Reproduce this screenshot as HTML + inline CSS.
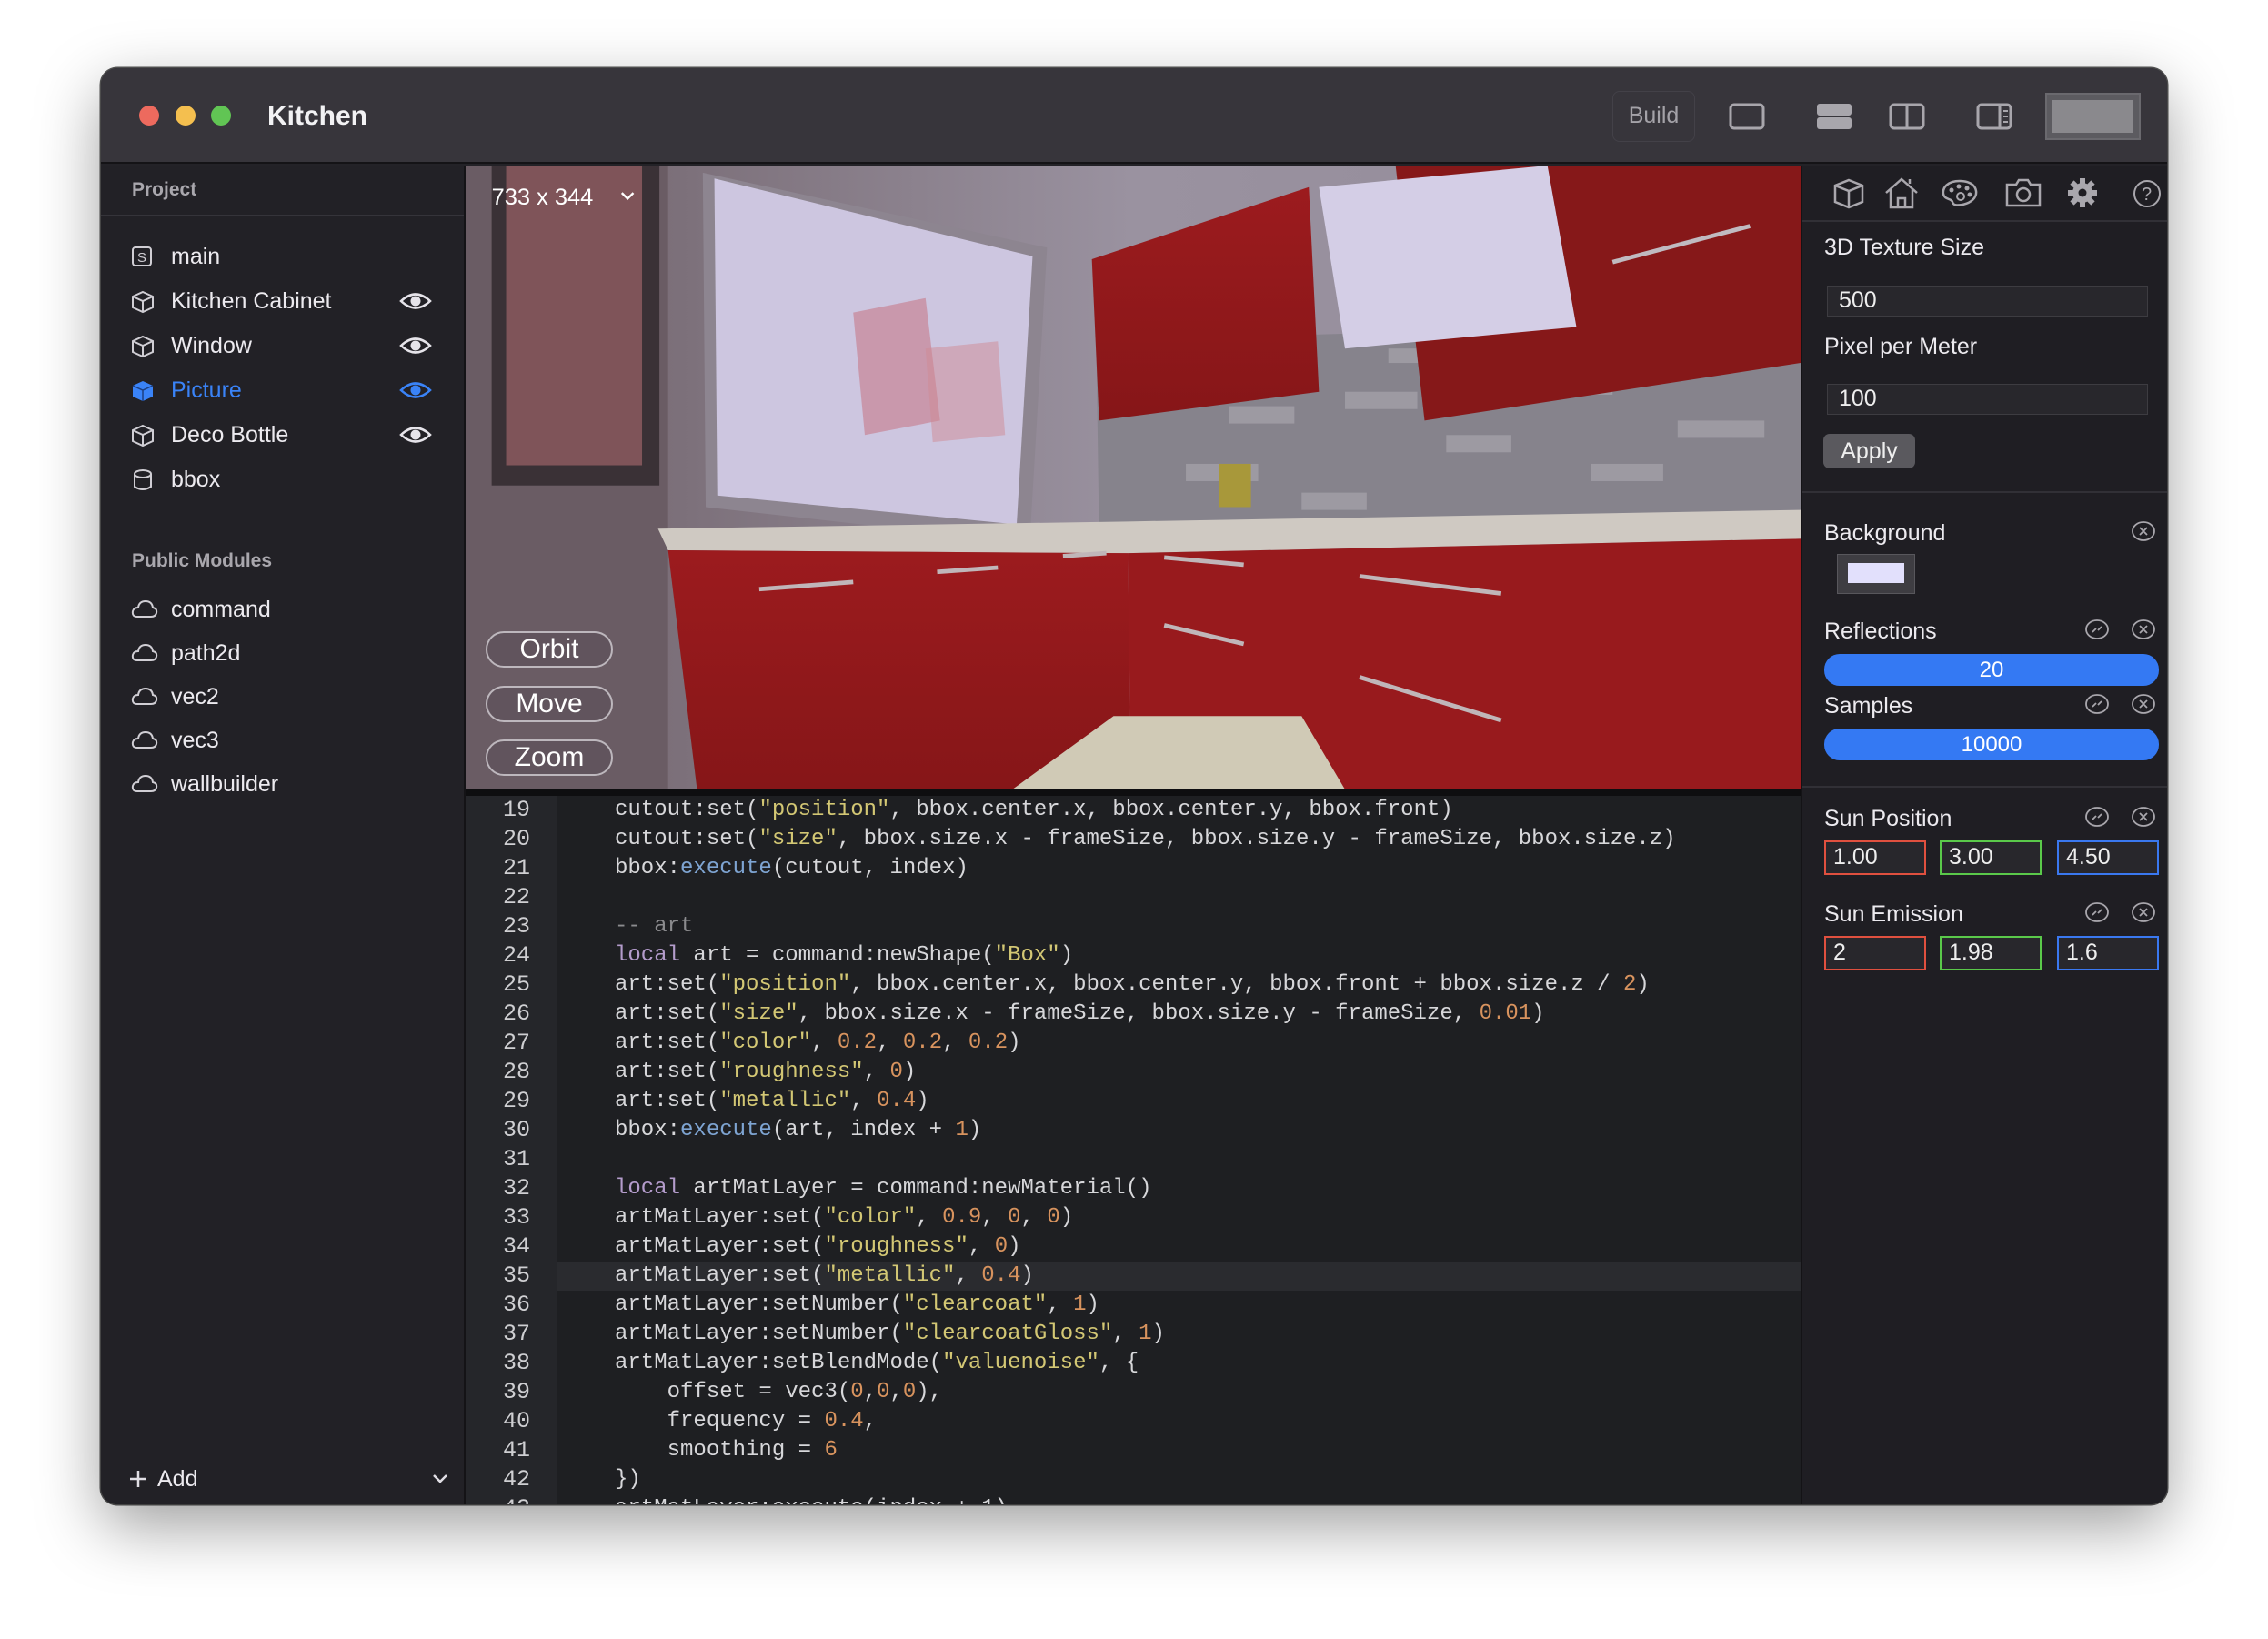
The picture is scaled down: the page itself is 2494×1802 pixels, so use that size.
<!DOCTYPE html>
<html><head><meta charset="utf-8"><style>
*{margin:0;padding:0;box-sizing:border-box}
body{width:2494px;height:1802px;background:#fff;position:relative;overflow:hidden;font-family:"Liberation Sans",sans-serif;color:#e8e8ea}
.win{position:absolute;left:111px;top:75px;width:2272px;height:1579px;border-radius:18px;background:#232227;box-shadow:0 24px 70px rgba(0,0,0,.38),0 0 0 1.5px #555;overflow:hidden}
.a{position:absolute}
.tb{left:0;top:0;width:2272px;height:105px;background:#37353b;border-bottom:2px solid #141316}
.dot{width:22px;height:22px;border-radius:50%;top:41px}
.side{left:0;top:107px;width:401px;height:1472px;background:#222126;border-right:2px solid #141316}
.si{position:absolute;left:0;width:400px;font-size:25px;color:#eceaef;height:40px;line-height:40px}
.si svg{position:absolute;left:33px;top:8px}
.si span{position:absolute;left:77px;white-space:nowrap}
.si svg.eye{position:absolute;left:328px;top:9px}
.hdr{position:absolute;left:34px;font-size:21px;font-weight:bold;color:#a9a7ad}
.vp{left:401px;top:107px;width:1468px;height:686px;overflow:hidden}
.code{left:401px;top:800px;width:1468px;height:779px;background:#1e1f22;font-family:"Liberation Mono",monospace;font-size:24px}
.gut{position:absolute;left:0;top:0;width:100px;height:100%;background:#25262a}
.ln{position:absolute;left:0;width:1468px;height:32px;line-height:32px;white-space:pre}
.ln b{font-weight:normal;position:absolute;left:0;width:71px;text-align:right;color:#cfcfd2;font-size:25px}
.ln i{font-style:normal;position:absolute;left:164px;color:#d7d7da}
.s{color:#d3c774}.n{color:#d8935e}.k{color:#b49ccc}.f{color:#7ea4d2}.c{color:#8b8b8e}
.rp{left:1869px;top:107px;width:403px;height:1472px;background:#1f1e23;border-left:2px solid #141316}
.lab{position:absolute;left:24px;font-size:25px;color:#eceaef}
.inp{position:absolute;left:27px;width:353px;height:34px;background:#28272c;border:1.5px solid #3d3c41;font-size:25px;line-height:31px;padding-left:12px;color:#eee}
.sep{position:absolute;left:0;width:403px;height:2px;background:#313036}
.sl{position:absolute;left:24px;width:368px;height:35px;border-radius:17px;background:#3479f3;text-align:center;font-size:24px;line-height:35px;color:#fff}
.box{position:absolute;width:112px;height:38px;background:#28272c;border:2.5px solid;font-size:25px;line-height:33px;padding-left:8px;color:#eee}
.ic{position:absolute}
.btn{position:absolute;width:140px;height:40px;border:2px solid #bdb7bd;border-radius:20px;text-align:center;line-height:36px;font-size:30px;color:#fff;background:rgba(80,70,80,.35)}
</style></head><body>
<div class="win">
<div class="a tb">
 <div class="a dot" style="left:42px;background:#ed6a5e"></div>
 <div class="a dot" style="left:82px;background:#f4bf4f"></div>
 <div class="a dot" style="left:121px;background:#61c554"></div>
 <div class="a" style="left:183px;top:36px;font-size:30px;font-weight:bold;color:#f2f2f4">Kitchen</div>
 <div class="a" style="left:1662px;top:25px;width:91px;height:56px;border:1.5px solid #434148;border-radius:8px;font-size:25px;line-height:53px;text-align:center;color:#a4a2a8">Build</div>
 <svg class="a" style="left:1790px;top:38px" width="40" height="30"><rect x="2" y="2" width="36" height="26" rx="4" fill="none" stroke="#a8a6ac" stroke-width="3"/></svg>
 <svg class="a" style="left:1886px;top:38px" width="40" height="30"><rect x="1" y="1" width="38" height="13" rx="3" fill="#a8a6ac"/><rect x="1" y="16" width="38" height="13" rx="3" fill="#a8a6ac"/></svg>
 <svg class="a" style="left:1966px;top:38px" width="40" height="30"><rect x="2" y="2" width="36" height="26" rx="4" fill="none" stroke="#a8a6ac" stroke-width="3"/><line x1="20" y1="2" x2="20" y2="28" stroke="#a8a6ac" stroke-width="3"/></svg>
 <svg class="a" style="left:2062px;top:38px" width="40" height="30"><rect x="2" y="2" width="36" height="26" rx="4" fill="none" stroke="#a8a6ac" stroke-width="3"/><line x1="26" y1="2" x2="26" y2="28" stroke="#a8a6ac" stroke-width="3"/><line x1="30" y1="9" x2="35" y2="9" stroke="#a8a6ac" stroke-width="2"/><line x1="30" y1="15" x2="35" y2="15" stroke="#a8a6ac" stroke-width="2"/><line x1="30" y1="21" x2="35" y2="21" stroke="#a8a6ac" stroke-width="2"/></svg>
 <div class="a" style="left:2138px;top:27px;width:105px;height:52px;background:#5c5b60;border:2px solid #6a696e"><div style="margin:6px 6px;height:36px;background:#8a898d"></div></div>
</div>

<div class="a side">
 <div class="hdr" style="top:15px;">Project</div>
 <div class="a" style="left:0;top:54px;width:399px;height:2px;background:#35343a"></div>
 <div class="si" style="top:80px"><svg width="24" height="24"><rect x="2" y="2" width="20" height="20" rx="3" fill="none" stroke="#d0ced4" stroke-width="2"/><text x="7" y="18" font-size="15" fill="#d0ced4" font-family="Liberation Sans">S</text></svg><span>main</span></div>
 <div class="si" style="top:129px"><svg width="26" height="26"><path d="M13 2 L24 7 L24 19 L13 24 L2 19 L2 7 Z M2 7 L13 12 L24 7 M13 12 L13 24" fill="none" stroke="#d0ced4" stroke-width="2"/></svg><span>Kitchen Cabinet</span><svg class="eye" width="36" height="22"><path d="M2 11 Q18 -4 34 11 Q18 26 2 11 Z" fill="none" stroke="#e6e4ea" stroke-width="2.5"/><circle cx="18" cy="11" r="5.5" fill="#e6e4ea"/></svg></div>
 <div class="si" style="top:178px"><svg width="26" height="26"><path d="M13 2 L24 7 L24 19 L13 24 L2 19 L2 7 Z M2 7 L13 12 L24 7 M13 12 L13 24" fill="none" stroke="#d0ced4" stroke-width="2"/></svg><span>Window</span><svg class="eye" width="36" height="22"><path d="M2 11 Q18 -4 34 11 Q18 26 2 11 Z" fill="none" stroke="#e6e4ea" stroke-width="2.5"/><circle cx="18" cy="11" r="5.5" fill="#e6e4ea"/></svg></div>
 <div class="si" style="top:227px;color:#3a83f7"><svg width="26" height="26"><path d="M13 2 L24 7 L24 19 L13 24 L2 19 L2 7 Z" fill="#3a83f7"/><path d="M2 7 L13 12 L24 7 M13 12 L13 24" fill="none" stroke="#1d3f80" stroke-width="1.5"/></svg><span>Picture</span><svg class="eye" width="36" height="22"><path d="M2 11 Q18 -4 34 11 Q18 26 2 11 Z" fill="none" stroke="#3a83f7" stroke-width="2.5"/><circle cx="18" cy="11" r="5.5" fill="#3a83f7"/></svg></div>
 <div class="si" style="top:276px"><svg width="26" height="26"><path d="M13 2 L24 7 L24 19 L13 24 L2 19 L2 7 Z M2 7 L13 12 L24 7 M13 12 L13 24" fill="none" stroke="#d0ced4" stroke-width="2"/></svg><span>Deco Bottle</span><svg class="eye" width="36" height="22"><path d="M2 11 Q18 -4 34 11 Q18 26 2 11 Z" fill="none" stroke="#e6e4ea" stroke-width="2.5"/><circle cx="18" cy="11" r="5.5" fill="#e6e4ea"/></svg></div>
 <div class="si" style="top:325px"><svg width="26" height="26"><ellipse cx="13" cy="6" rx="9" ry="4" fill="none" stroke="#d0ced4" stroke-width="2"/><path d="M4 6 L4 20 Q13 26 22 20 L22 6" fill="none" stroke="#d0ced4" stroke-width="2"/></svg><span>bbox</span></div>
 <div class="hdr" style="top:423px;">Public Modules</div>
 <div class="si" style="top:468px"><svg width="30" height="24"><path d="M7 20 Q1 20 2 14 Q3 10 8 10 Q9 3 16 3 Q23 3 24 10 Q29 11 28 16 Q27 20 22 20 Z" fill="none" stroke="#d0ced4" stroke-width="2"/></svg><span>command</span></div>
 <div class="si" style="top:516px"><svg width="30" height="24"><path d="M7 20 Q1 20 2 14 Q3 10 8 10 Q9 3 16 3 Q23 3 24 10 Q29 11 28 16 Q27 20 22 20 Z" fill="none" stroke="#d0ced4" stroke-width="2"/></svg><span>path2d</span></div>
 <div class="si" style="top:564px"><svg width="30" height="24"><path d="M7 20 Q1 20 2 14 Q3 10 8 10 Q9 3 16 3 Q23 3 24 10 Q29 11 28 16 Q27 20 22 20 Z" fill="none" stroke="#d0ced4" stroke-width="2"/></svg><span>vec2</span></div>
 <div class="si" style="top:612px"><svg width="30" height="24"><path d="M7 20 Q1 20 2 14 Q3 10 8 10 Q9 3 16 3 Q23 3 24 10 Q29 11 28 16 Q27 20 22 20 Z" fill="none" stroke="#d0ced4" stroke-width="2"/></svg><span>vec3</span></div>
 <div class="si" style="top:660px"><svg width="30" height="24"><path d="M7 20 Q1 20 2 14 Q3 10 8 10 Q9 3 16 3 Q23 3 24 10 Q29 11 28 16 Q27 20 22 20 Z" fill="none" stroke="#d0ced4" stroke-width="2"/></svg><span>wallbuilder</span></div>
 <div class="si" style="top:1424px"><svg width="24" height="24" style="left:29px"><path d="M12 3 V21 M3 12 H21" stroke="#e0dee4" stroke-width="2.5"/></svg><span style="left:62px">Add</span></div>
 <svg class="a" style="left:364px;top:1438px" width="18" height="12"><path d="M2 2 L9 9 L16 2" fill="none" stroke="#e0dee4" stroke-width="2.5"/></svg>
</div>

<div class="a vp">
<svg width="1468" height="686" viewBox="322 113 923 433" preserveAspectRatio="none">
 <defs>
  <linearGradient id="wall" x1="0" y1="0" x2="1" y2="0"><stop offset="0" stop-color="#6e6068"/><stop offset=".5" stop-color="#9a92a0"/><stop offset="1" stop-color="#928a98"/></linearGradient>
  <linearGradient id="cab" x1="0" y1="0" x2="0" y2="1"><stop offset="0" stop-color="#9c1b1e"/><stop offset="1" stop-color="#861618"/></linearGradient>
 </defs>
 <rect x="322" y="113" width="923" height="433" fill="url(#wall)"/>
 <rect x="322" y="113" width="140" height="433" fill="#6a5c64"/>
 <rect x="340" y="113" width="116" height="222" fill="#3a3136"/>
 <rect x="350" y="113" width="94" height="208" fill="#7f5459"/>
 <polygon points="486,118 724,170 712,375 488,350" fill="#8d8590"/>
 <polygon points="494,122 714,176 703,362 496,342" fill="#cdc6e0"/>
 <polygon points="590,215 640,205 650,290 598,300" fill="#c77a88" opacity=".6"/>
 <polygon points="640,240 690,235 695,300 645,305" fill="#d08a94" opacity=".5"/>
 <polygon points="758,235 1245,220 1245,372 760,368" fill="#86838c"/>
 <g fill="#a3a0a8" opacity=".8">
  <rect x="790" y="260" width="40" height="12"/><rect x="850" y="280" width="45" height="12"/><rect x="930" y="270" width="50" height="12"/><rect x="1000" y="300" width="45" height="12"/><rect x="820" y="320" width="50" height="12"/><rect x="1060" y="260" width="55" height="12"/><rect x="1100" y="320" width="50" height="12"/><rect x="900" y="340" width="45" height="12"/><rect x="1160" y="290" width="60" height="12"/><rect x="960" y="240" width="40" height="10"/>
 </g>
 <rect x="843" y="320" width="22" height="30" fill="#a8983a"/>
 <polygon points="755,178 905,128 912,270 760,290" fill="url(#cab)"/>
 <polygon points="965,113 1245,113 1245,250 985,290" fill="#861819"/>
 <polygon points="912,128 1070,113 1090,225 930,240" fill="#d4cee6"/>
 <line x1="1115" y1="180" x2="1210" y2="155" stroke="#c0bac0" stroke-width="3"/>
 <polygon points="455,365 780,360 1245,352 1245,372 780,382 462,380" fill="#cfc9c2"/>
 <polygon points="462,380 780,382 782,546 482,546" fill="url(#cab)"/>
 <polygon points="780,382 1245,372 1245,546 782,546" fill="#981a1d"/>
 <g stroke="#c0b6b9" stroke-width="3">
  <line x1="525" y1="407" x2="590" y2="402"/><line x1="648" y1="395" x2="690" y2="392"/><line x1="735" y1="384" x2="765" y2="382"/><line x1="805" y1="385" x2="860" y2="390"/><line x1="940" y1="398" x2="1038" y2="410"/><line x1="805" y1="432" x2="860" y2="445"/><line x1="940" y1="468" x2="1038" y2="498"/>
 </g>
 <polygon points="700,546 770,495 900,495 930,546" fill="#d0cab6"/>
 <text x="340" y="140" font-size="16" fill="#fff" font-family="Liberation Sans">733 x 344</text>
 <path d="M430 132 L434 136 L438 132" fill="none" stroke="#fff" stroke-width="1.5"/>
</svg>
<div class="btn" style="left:22px;top:512px">Orbit</div>
<div class="btn" style="left:22px;top:572px">Move</div>
<div class="btn" style="left:22px;top:631px">Zoom</div>
</div>
<div class="a" style="left:401px;top:793px;width:1468px;height:7px;background:#0e0e10"></div>

<div class="a code">
 <div class="gut"></div>
 <div class="a" style="left:100px;top:512px;width:1368px;height:32px;background:#2a2b2f"></div>
 <div class="ln" style="top:0"><b>19</b><i>cutout:set(<span class="s">"position"</span>, bbox.center.x, bbox.center.y, bbox.front)</i></div>
 <div class="ln" style="top:32px"><b>20</b><i>cutout:set(<span class="s">"size"</span>, bbox.size.x - frameSize, bbox.size.y - frameSize, bbox.size.z)</i></div>
 <div class="ln" style="top:64px"><b>21</b><i>bbox:<span class="f">execute</span>(cutout, index)</i></div>
 <div class="ln" style="top:96px"><b>22</b></div>
 <div class="ln" style="top:128px"><b>23</b><i><span class="c">-- art</span></i></div>
 <div class="ln" style="top:160px"><b>24</b><i><span class="k">local</span> art = command:newShape(<span class="s">"Box"</span>)</i></div>
 <div class="ln" style="top:192px"><b>25</b><i>art:set(<span class="s">"position"</span>, bbox.center.x, bbox.center.y, bbox.front + bbox.size.z / <span class="n">2</span>)</i></div>
 <div class="ln" style="top:224px"><b>26</b><i>art:set(<span class="s">"size"</span>, bbox.size.x - frameSize, bbox.size.y - frameSize, <span class="n">0.01</span>)</i></div>
 <div class="ln" style="top:256px"><b>27</b><i>art:set(<span class="s">"color"</span>, <span class="n">0.2</span>, <span class="n">0.2</span>, <span class="n">0.2</span>)</i></div>
 <div class="ln" style="top:288px"><b>28</b><i>art:set(<span class="s">"roughness"</span>, <span class="n">0</span>)</i></div>
 <div class="ln" style="top:320px"><b>29</b><i>art:set(<span class="s">"metallic"</span>, <span class="n">0.4</span>)</i></div>
 <div class="ln" style="top:352px"><b>30</b><i>bbox:<span class="f">execute</span>(art, index + <span class="n">1</span>)</i></div>
 <div class="ln" style="top:384px"><b>31</b></div>
 <div class="ln" style="top:416px"><b>32</b><i><span class="k">local</span> artMatLayer = command:newMaterial()</i></div>
 <div class="ln" style="top:448px"><b>33</b><i>artMatLayer:set(<span class="s">"color"</span>, <span class="n">0.9</span>, <span class="n">0</span>, <span class="n">0</span>)</i></div>
 <div class="ln" style="top:480px"><b>34</b><i>artMatLayer:set(<span class="s">"roughness"</span>, <span class="n">0</span>)</i></div>
 <div class="ln" style="top:512px"><b>35</b><i>artMatLayer:set(<span class="s">"metallic"</span>, <span class="n">0.4</span>)</i></div>
 <div class="ln" style="top:544px"><b>36</b><i>artMatLayer:setNumber(<span class="s">"clearcoat"</span>, <span class="n">1</span>)</i></div>
 <div class="ln" style="top:576px"><b>37</b><i>artMatLayer:setNumber(<span class="s">"clearcoatGloss"</span>, <span class="n">1</span>)</i></div>
 <div class="ln" style="top:608px"><b>38</b><i>artMatLayer:setBlendMode(<span class="s">"valuenoise"</span>, {</i></div>
 <div class="ln" style="top:640px"><b>39</b><i>    offset = vec3(<span class="n">0</span>,<span class="n">0</span>,<span class="n">0</span>),</i></div>
 <div class="ln" style="top:672px"><b>40</b><i>    frequency = <span class="n">0.4</span>,</i></div>
 <div class="ln" style="top:704px"><b>41</b><i>    smoothing = <span class="n">6</span></i></div>
 <div class="ln" style="top:736px"><b>42</b><i>})</i></div>
 <div class="ln" style="top:768px"><b>43</b><i>artMatLayer:execute(index + 1)</i></div>
</div>

<div class="a rp">
 <svg class="ic" style="left:32px;top:12px" width="38" height="38"><path d="M19 4 L34 10 L34 28 L19 34 L4 28 L4 10 Z M4 10 L19 16 L34 10 M19 16 L19 34" fill="none" stroke="#a9a7ad" stroke-width="2.5"/></svg>
 <svg class="ic" style="left:88px;top:10px" width="42" height="40"><path d="M4 20 L21 5 L38 20 M9 16 V36 H33 V16 M17 36 V26 H25 V36 M30 10 V5" fill="none" stroke="#a9a7ad" stroke-width="2.5"/></svg>
 <svg class="ic" style="left:152px;top:14px" width="42" height="32"><path d="M21 3 C8 3 2 10 3 17 C4 24 12 22 13 26 C14 30 18 30 24 29 C34 27 40 21 39 14 C38 7 31 3 21 3 Z" fill="none" stroke="#a9a7ad" stroke-width="2.5"/><circle cx="12" cy="13" r="2.5" fill="#a9a7ad"/><circle cx="20" cy="9" r="2.5" fill="#a9a7ad"/><circle cx="29" cy="11" r="2.5" fill="#a9a7ad"/><circle cx="32" cy="18" r="2.5" fill="#a9a7ad"/><circle cx="22" cy="20" r="4" fill="none" stroke="#a9a7ad" stroke-width="2"/></svg>
 <svg class="ic" style="left:222px;top:13px" width="42" height="34"><path d="M3 8 H13 L16 3 H26 L29 8 H39 V31 H3 Z" fill="none" stroke="#a9a7ad" stroke-width="2.5"/><circle cx="21" cy="19" r="7" fill="none" stroke="#a9a7ad" stroke-width="2.5"/></svg>
 <svg class="ic" style="left:290px;top:12px" width="36" height="36"><circle cx="18" cy="18" r="11" fill="#a9a7ad"/><g stroke="#a9a7ad" stroke-width="6"><line x1="18" y1="2" x2="18" y2="34"/><line x1="2" y1="18" x2="34" y2="18"/><line x1="6.5" y1="6.5" x2="29.5" y2="29.5"/><line x1="29.5" y1="6.5" x2="6.5" y2="29.5"/></g><circle cx="18" cy="18" r="4.5" fill="#1f1e23"/></svg>
 <svg class="ic" style="left:362px;top:14px" width="34" height="34"><circle cx="17" cy="17" r="14" fill="none" stroke="#a9a7ad" stroke-width="2"/><text x="11" y="24" font-size="20" fill="#a9a7ad" font-family="Liberation Sans">?</text></svg>
 <div class="sep" style="top:60px"></div>
 <div class="lab" style="top:76px">3D Texture Size</div>
 <div class="inp" style="top:132px">500</div>
 <div class="lab" style="top:185px">Pixel per Meter</div>
 <div class="inp" style="top:240px">100</div>
 <div class="a" style="left:23px;top:295px;width:101px;height:38px;border-radius:7px;background:#5a595e;font-size:25px;line-height:38px;text-align:center;color:#eee">Apply</div>
 <div class="sep" style="top:358px"></div>
 <div class="lab" style="top:390px">Background</div>
 <svg class="ic" style="left:361px;top:390px" width="28" height="24"><ellipse cx="14" cy="12" rx="12" ry="10" fill="none" stroke="#a9a7ad" stroke-width="1.8"/><path d="M10 8 L18 16 M18 8 L10 16" stroke="#a9a7ad" stroke-width="1.8"/></svg>
 <div class="a" style="left:38px;top:427px;width:86px;height:44px;background:#3e3d42;border:1.5px solid #58575c"><div style="margin:9px 11px;height:22px;background:#e2e0fc"></div></div>
 <div class="lab" style="top:498px">Reflections</div>
 <svg class="ic" style="left:310px;top:498px" width="28" height="24"><ellipse cx="14" cy="12" rx="12" ry="10" fill="none" stroke="#a9a7ad" stroke-width="1.8"/><path d="M9 15 L13 11 M15 13 L19 9" stroke="#a9a7ad" stroke-width="1.8"/></svg>
 <svg class="ic" style="left:361px;top:498px" width="28" height="24"><ellipse cx="14" cy="12" rx="12" ry="10" fill="none" stroke="#a9a7ad" stroke-width="1.8"/><path d="M10 8 L18 16 M18 8 L10 16" stroke="#a9a7ad" stroke-width="1.8"/></svg>
 <div class="sl" style="top:537px">20</div>
 <div class="lab" style="top:580px">Samples</div>
 <svg class="ic" style="left:310px;top:580px" width="28" height="24"><ellipse cx="14" cy="12" rx="12" ry="10" fill="none" stroke="#a9a7ad" stroke-width="1.8"/><path d="M9 15 L13 11 M15 13 L19 9" stroke="#a9a7ad" stroke-width="1.8"/></svg>
 <svg class="ic" style="left:361px;top:580px" width="28" height="24"><ellipse cx="14" cy="12" rx="12" ry="10" fill="none" stroke="#a9a7ad" stroke-width="1.8"/><path d="M10 8 L18 16 M18 8 L10 16" stroke="#a9a7ad" stroke-width="1.8"/></svg>
 <div class="sl" style="top:619px">10000</div>
 <div class="sep" style="top:682px"></div>
 <div class="lab" style="top:704px">Sun Position</div>
 <svg class="ic" style="left:310px;top:704px" width="28" height="24"><ellipse cx="14" cy="12" rx="12" ry="10" fill="none" stroke="#a9a7ad" stroke-width="1.8"/><path d="M9 15 L13 11 M15 13 L19 9" stroke="#a9a7ad" stroke-width="1.8"/></svg>
 <svg class="ic" style="left:361px;top:704px" width="28" height="24"><ellipse cx="14" cy="12" rx="12" ry="10" fill="none" stroke="#a9a7ad" stroke-width="1.8"/><path d="M10 8 L18 16 M18 8 L10 16" stroke="#a9a7ad" stroke-width="1.8"/></svg>
 <div class="box" style="left:24px;top:742px;border-color:#e0503f">1.00</div>
 <div class="box" style="left:151px;top:742px;border-color:#5ac94a">3.00</div>
 <div class="box" style="left:280px;top:742px;border-color:#3a78f0">4.50</div>
 <div class="lab" style="top:809px">Sun Emission</div>
 <svg class="ic" style="left:310px;top:809px" width="28" height="24"><ellipse cx="14" cy="12" rx="12" ry="10" fill="none" stroke="#a9a7ad" stroke-width="1.8"/><path d="M9 15 L13 11 M15 13 L19 9" stroke="#a9a7ad" stroke-width="1.8"/></svg>
 <svg class="ic" style="left:361px;top:809px" width="28" height="24"><ellipse cx="14" cy="12" rx="12" ry="10" fill="none" stroke="#a9a7ad" stroke-width="1.8"/><path d="M10 8 L18 16 M18 8 L10 16" stroke="#a9a7ad" stroke-width="1.8"/></svg>
 <div class="box" style="left:24px;top:847px;border-color:#e0503f">2</div>
 <div class="box" style="left:151px;top:847px;border-color:#5ac94a">1.98</div>
 <div class="box" style="left:280px;top:847px;border-color:#3a78f0">1.6</div>
</div>
</div>
</body></html>
